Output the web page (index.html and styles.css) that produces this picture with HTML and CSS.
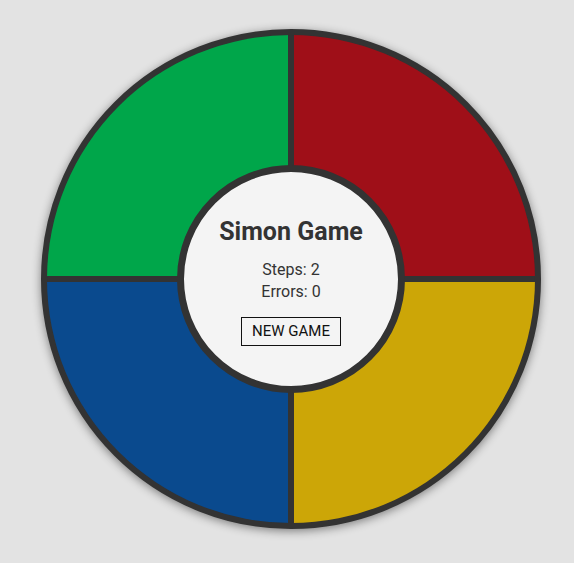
FILE: index.html
```html
<!DOCTYPE html>
<html lang="en">
<head>
    <meta charset="UTF-8">
    <meta name="viewport" content="width=device-width, initial-scale=1.0">
    <title>Simon Game</title>
    <link rel="stylesheet" href="styles.css">
</head>
<body>
    <div class="board">
        <div class="pad green"></div>
        <div class="pad red"></div>
        <div class="pad blue"></div>
        <div class="pad yellow"></div>

        <div class="center">
            <h1>Simon Game</h1>
            <div class="stats">
                <div>Steps: <span id="steps">2</span></div>
                <div>Errors: <span id="errors">0</span></div>
            </div>
            <button class="new-game">NEW GAME</button>
        </div>
    </div>
</body>
</html>
```

FILE: styles.css
```css
body {
    font-family: Roboto, "Liberation Sans", sans-serif;
    background-color: #e3e3e3;
    margin: 0;
    padding: 29px 0 0 41px;
    height: 563px;
    box-sizing: border-box;
    color: #333;
}
.board {
    position: relative;
    width: 488px;
    height: 488px;
    border: 6px solid #333;
    border-radius: 50%;
    background-color: #333;
    overflow: hidden;
    display: grid;
    grid-template-columns: 1fr 1fr;
    grid-template-rows: 1fr 1fr;
    gap: 6px;
    box-shadow: 0 2px 10px rgba(0, 0, 0, 0.45);
}
.green {
    background-color: #00a64a;
}
.red {
    background-color: #9f0f18;
}
.blue {
    background-color: #0a4a8e;
}
.yellow {
    background-color: #cca607;
}
.center {
    position: absolute;
    top: 50%;
    left: 50%;
    width: 228px;
    height: 228px;
    margin: -114px 0 0 -114px;
    padding-top: 4px;
    box-sizing: border-box;
    border: 7px solid #333;
    border-radius: 50%;
    background-color: #f4f4f4;
    display: flex;
    flex-direction: column;
    align-items: center;
    justify-content: center;
}
h1 {
    font-size: 25px;
    font-weight: bold;
    line-height: 29px;
    margin: 0 0 13px;
}
.stats {
    font-size: 16px;
    line-height: 22px;
    text-align: center;
}
.new-game {
    margin-top: 14px;
    font-family: Roboto, "Liberation Sans", sans-serif;
    font-size: 15px;
    line-height: 17px;
    padding: 5px 10px;
    border: 1px solid #111;
    background: transparent;
    color: #111;
    cursor: pointer;
}
```
